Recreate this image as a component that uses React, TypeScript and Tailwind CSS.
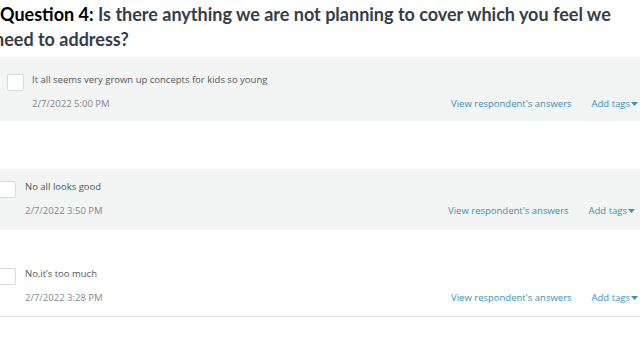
import React from "react";

type Answer = {
  id: number;
  text: string;
  date: string;
  band: string;
  box: string;
  body: string;
};

const answers: Answer[] = [
  {
    id: 1,
    text: "It all seems very grown up concepts for kids so young",
    date: "2/7/2022 5:00 PM",
    band: "mt-[5px] h-[64px] bg-[#f3f4f4] pt-[17px] pl-[7px] pr-[2px]",
    box: "mt-0",
    body: "ml-[8px]",
  },
  {
    id: 2,
    text: "No all looks good",
    date: "2/7/2022 3:50 PM",
    band: "mt-[48px] h-[61px] bg-[#f3f4f4] pt-[12px] pl-0 pr-[5px]",
    box: "-ml-[1px]",
    body: "ml-[9px]",
  },
  {
    id: 3,
    text: "No,it\u2019s too much",
    date: "2/7/2022 3:28 PM",
    band: "mt-[26px] h-[61px] bg-white border-b border-[#e6e7e7] pt-[12px] pl-0 pr-[2px]",
    box: "-ml-[1px]",
    body: "ml-[9px]",
  },
];

const Row = ({ a }: { a: Answer }) => (
  <div className={`flex ${a.band}`}>
    <div
      className={`h-[17px] w-[17px] shrink-0 rounded-[2px] border border-[#d8dada] bg-white ${a.box}`}
    />
    <div className={`flex flex-1 flex-col ${a.body}`}>
      <div className="text-[9.5px] leading-[12px] text-[#55585a]">{a.text}</div>
      <div className="mt-[12px] flex items-center text-[9.5px] leading-[12px]">
        <span className="text-[#85888a]">{a.date}</span>
        <span className="ml-auto text-[#3a93b4]">View respondent&apos;s answers</span>
        <span className="ml-[20px] flex items-center text-[#3a93b4]">
          Add tags
          <svg width="7" height="4" viewBox="0 0 7 4" className="ml-[1px]">
            <path d="M0 0h7L3.5 4z" fill="#3a93b4" />
          </svg>
        </span>
      </div>
    </div>
  </div>
);

export default function App() {
  return (
    <div
      className="h-[360px] w-[640px] overflow-hidden bg-white"
      style={{ fontFamily: "'Open Sans', 'Liberation Sans', sans-serif" }}
    >
      <h2
        className="-ml-[6px] pt-[2px] indent-[6px] text-[18px] font-bold leading-[25px] text-[#333e48]"
        style={{ fontFamily: "Lato, 'Noto Sans', sans-serif" }}
      >
        <span className="text-black">Question 4:</span> Is there anything we are not
        planning to cover which you feel we need to address?
      </h2>
      {answers.map((a) => (
        <Row key={a.id} a={a} />
      ))}
    </div>
  );
}
